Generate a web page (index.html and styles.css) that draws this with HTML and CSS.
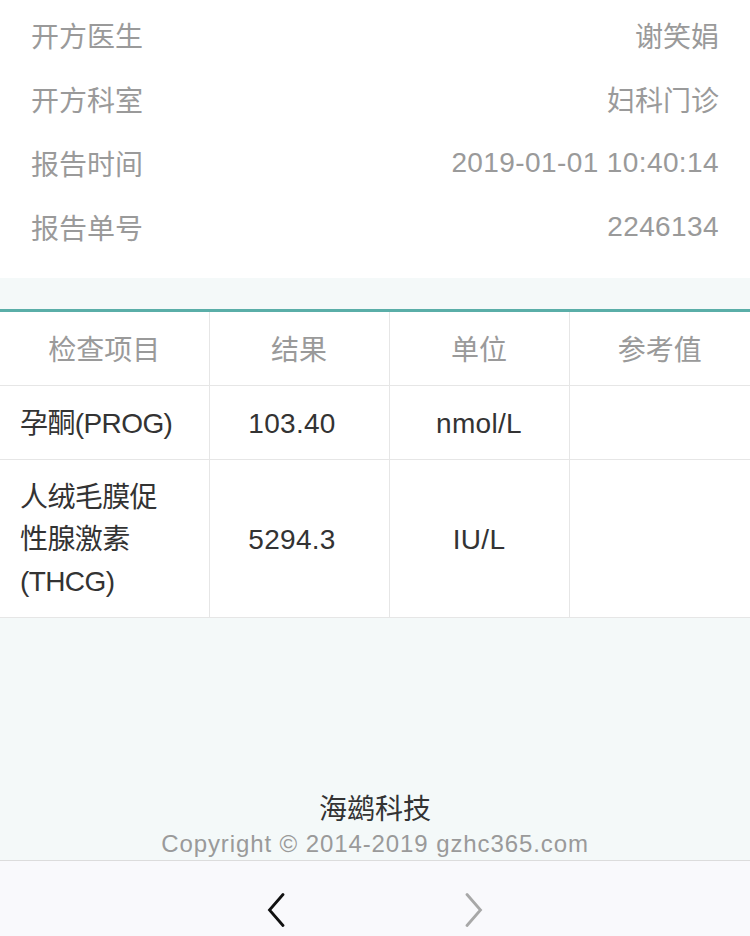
FILE: index.html
```html
<!DOCTYPE html>
<html lang="zh-CN">
<head>
<meta charset="utf-8">
<title>检查报告</title>
<link rel="stylesheet" href="styles.css">
</head>
<body>
<div class="page">
  <section class="info">
    <div class="info-row"><span class="label">开方医生</span><span class="value">谢笑娟</span></div>
    <div class="info-row"><span class="label">开方科室</span><span class="value">妇科门诊</span></div>
    <div class="info-row"><span class="label">报告时间</span><span class="value num">2019-01-01 10:40:14</span></div>
    <div class="info-row"><span class="label">报告单号</span><span class="value num">2246134</span></div>
  </section>
  <div class="gap"></div>
  <table class="result">
    <colgroup>
      <col class="c1"><col class="c2"><col class="c3"><col class="c4">
    </colgroup>
    <thead>
      <tr><th>检查项目</th><th>结果</th><th>单位</th><th>参考值</th></tr>
    </thead>
    <tbody>
      <tr><td class="name">孕酮(PROG)</td><td class="val">103.40</td><td>nmol/L</td><td></td></tr>
      <tr><td class="name">人绒毛膜促<br>性腺激素<br>(THCG)</td><td class="val">5294.3</td><td>IU/L</td><td></td></tr>
    </tbody>
  </table>
  <div class="fill"></div>
  <footer class="footer">
    <div class="brand">海鹚科技</div>
    <div class="copy">Copyright © 2014-2019 gzhc365.com</div>
  </footer>
  <nav class="toolbar">
    <svg class="chev" width="20" height="34" viewBox="0 0 20 34"><path d="M17 1.5 L3.5 17 L17 32.5" fill="none" stroke="#111" stroke-width="2.8" stroke-linecap="round" stroke-linejoin="miter"/></svg>
    <svg class="chev" width="20" height="34" viewBox="0 0 20 34"><path d="M3 1.5 L16.5 17 L3 32.5" fill="none" stroke="#a8a8a8" stroke-width="2.8" stroke-linecap="round" stroke-linejoin="miter"/></svg>
  </nav>
</div>
</body>
</html>
```

FILE: styles.css
```css
html, body {
  margin: 0;
  padding: 0;
}
body {
  font-family: "Liberation Sans", "Noto Sans CJK SC", sans-serif;
  background: #f4f9f9;
}
.page {
  width: 750px;
  height: 936px;
  display: flex;
  flex-direction: column;
  overflow: hidden;
}
.info {
  background: #fff;
  padding: 3px 31px 19px 31px;
}
.info-row {
  height: 64px;
  display: flex;
  align-items: center;
  justify-content: space-between;
  font-size: 28px;
  color: #9a9a9a;
}
.num {
  letter-spacing: 0.4px;
}
.gap {
  height: 31px;
}
.result {
  border-collapse: collapse;
  background: #fff;
  width: 750px;
  border-top: 3px solid #5aaea8;
  table-layout: fixed;
}
.c1 { width: 209px; }
.c2 { width: 180px; }
.c3 { width: 180px; }
.c4 { width: 181px; }
.result th, .result td {
  border: 1px solid #e6e6e6;
  padding: 17px 0 14px 0;
  line-height: 42px;
  font-size: 28px;
  font-weight: normal;
  text-align: center;
  vertical-align: middle;
}
.result tr > :first-child { border-left: none; }
.result tr > :last-child { border-right: none; }
.result thead th { border-top: none; }
.result th {
  color: #9a9a9a;
  padding-top: 18px;
  padding-bottom: 13px;
}
.result td {
  color: #333;
  letter-spacing: 0.3px;
}
.result td.name {
  text-align: left;
  padding-left: 20px;
  letter-spacing: -0.6px;
}
.result td.val {
  padding-right: 14px;
}
.fill {
  flex: 1;
}
.footer {
  text-align: center;
}
.brand {
  font-size: 28px;
  color: #333;
  line-height: 36px;
}
.copy {
  font-size: 24px;
  color: #9a9a9a;
  line-height: 32px;
  letter-spacing: 0.9px;
}
.toolbar {
  box-sizing: border-box;
  height: 76px;
  background: #f9f9fc;
  border-top: 1px solid #dcdcdc;
  display: flex;
  justify-content: center;
  align-items: flex-start;
  gap: 178px;
  padding-top: 32px;
}
```
